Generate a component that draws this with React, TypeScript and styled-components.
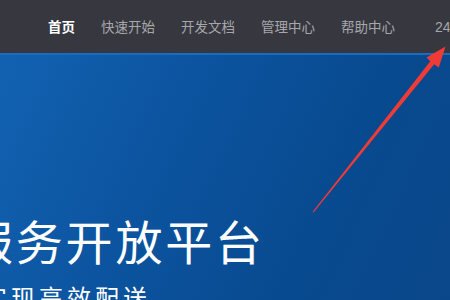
import React from "react";
import styled, { createGlobalStyle } from "styled-components";

const GlobalStyle = createGlobalStyle`
  html, body {
    margin: 0;
    padding: 0;
    overflow: hidden;
  }
  body {
    font-family: "Noto Sans CJK SC", "Noto Sans", sans-serif;
  }
`;

const Page = styled.div`
  position: relative;
  width: 450px;
  height: 300px;
  overflow: hidden;
  display: flex;
  flex-direction: column;
`;

const NavBar = styled.nav`
  height: 53px;
  flex-shrink: 0;
  background: #37383f;
  display: flex;
  align-items: center;
  padding-left: 48px;
  gap: 26px;
  white-space: nowrap;
`;

const NavItem = styled.span<{ $active?: boolean }>`
  font-size: 13.5px;
  line-height: 1;
  color: ${(p) => (p.$active ? "#ffffff" : "#a6a7ab")};
  font-weight: ${(p) => (p.$active ? 700 : 400)};
`;

const Hotline = styled.span`
  margin-left: 14px;
  font-family: "Liberation Sans", Arial, sans-serif;
  font-size: 14px;
  color: #a6a7ab;
`;

const Hero = styled.section`
  flex: 1;
  background: linear-gradient(115deg, #1262b1 0%, #0c54a0 35%, #084a8f 70%, #0a468a 100%);
  border-top: 2px solid #1a6cc0;
  padding-top: 161px;
  color: #ffffff;
  white-space: nowrap;
`;

const Title = styled.h1`
  margin: 0 0 0 -34px;
  font-size: 47px;
  line-height: 1;
  font-weight: 400;
  letter-spacing: 2.8px;
`;

const Subtitle = styled.p`
  margin: 22px 0 0 -17px;
  font-size: 24px;
  line-height: 1;
  font-weight: 400;
  letter-spacing: 4px;
`;

const Overlay = styled.svg`
  position: absolute;
  left: 0;
  top: 0;
  pointer-events: none;
`;

const navItems = ["首页", "快速开始", "开发文档", "管理中心", "帮助中心"];

const App = () => {
  return (
    <Page>
      <GlobalStyle />
      <NavBar>
        {navItems.map((item, i) => (
          <NavItem key={item} $active={i === 0}>
            {item}
          </NavItem>
        ))}
        <Hotline>24</Hotline>
      </NavBar>

      <Hero>
        <Title>服务开放平台</Title>
        <Subtitle>实现高效配送</Subtitle>
      </Hero>

      <Overlay width="450" height="300" viewBox="0 0 450 300">
        <polygon
          points="312.5,212 430.3,61.2 426.5,57.5 445.5,46.5 438.8,67.5 434.2,64.3 313.5,212.5"
          fill="#ee3b36"
        />
      </Overlay>
    </Page>
  );
};

export default App;
